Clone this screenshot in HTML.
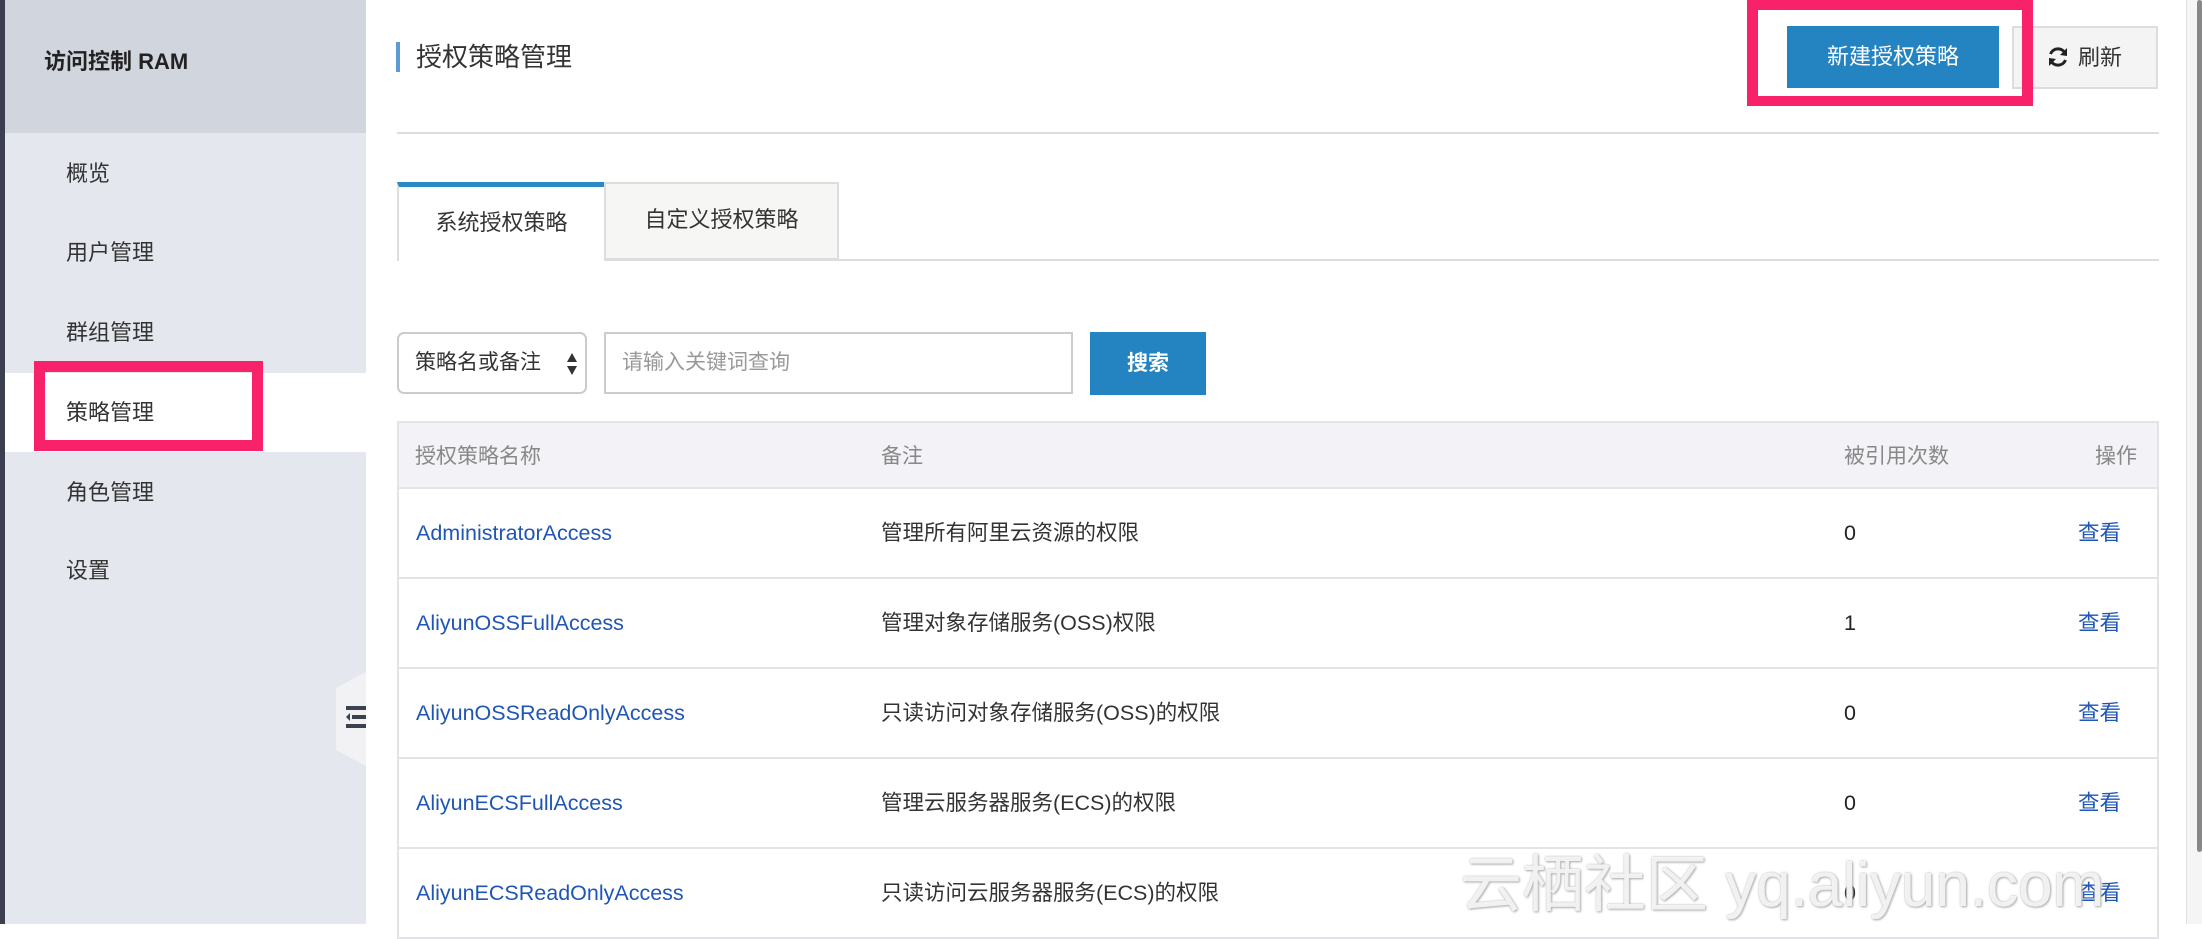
<!DOCTYPE html>
<html><head><meta charset="utf-8"><style>
*{margin:0;padding:0;box-sizing:border-box}
body{width:2202px;height:924px;overflow:hidden;background:#fff;position:relative;font-family:"Liberation Sans","Noto Sans CJK SC",sans-serif;color:#333}
.a{position:absolute}
.side{left:0;top:0;width:366px;height:924px;background:#e4e7ee}
.menu{left:66px;font-size:22px;color:#333;line-height:30px}
.tb{font-size:21px}
.row{left:397px;width:1762px;height:90px;border-bottom:2px solid #e2e4e8;border-left:2px solid #e2e4e8;border-right:2px solid #e2e4e8}
.row span{position:absolute;top:0;line-height:88px;font-size:21.5px}
.n{left:17px;color:#1f56b5}
.r{left:482px;color:#333}
.c{left:1445px;color:#222}
.v{left:1679px;color:#1f56b5}
</style></head><body>
<div class="a side"></div>
<div class="a" style="left:0;top:0;width:5px;height:924px;background:#3b3f4f"></div>
<div class="a" style="left:5px;top:0;width:361px;height:133px;background:#d1d5de"></div>
<div class="a" style="left:44px;top:47px;font-size:22px;font-weight:bold;color:#222;line-height:30px">访问控制 RAM</div>
<div class="a menu" style="top:159px">概览</div>
<div class="a menu" style="top:238px">用户管理</div>
<div class="a menu" style="top:318px">群组管理</div>
<div class="a" style="left:5px;top:373px;width:361px;height:79px;background:#fff"></div>
<div class="a menu" style="top:398px">策略管理</div>
<div class="a menu" style="top:478px">角色管理</div>
<div class="a menu" style="top:556px">设置</div>
<div class="a" style="left:34px;top:361px;width:229px;height:90px;border:11px solid #f7226a"></div>
<svg class="a" style="left:336px;top:672px" width="30" height="94"><polygon points="30,0 30,94 0,78 0,16" fill="#f2f2f4"/><rect x="10" y="34" width="20" height="4" fill="#3c4150"/><rect x="16" y="43" width="14" height="4" fill="#3c4150"/><rect x="10" y="52" width="20" height="4" fill="#3c4150"/><polygon points="14,41 14,49 10,45" fill="#3c4150"/></svg>

<div class="a" style="left:396px;top:42px;width:4px;height:30px;background:#5b9bd5"></div>
<div class="a" style="left:416px;top:40px;font-size:26px;color:#333;line-height:34px">授权策略管理</div>
<div class="a" style="left:397px;top:132px;width:1762px;height:2px;background:#ddd"></div>
<div class="a" style="left:1787px;top:26px;width:212px;height:62px;background:#2484c1;color:#fff;font-size:22px;line-height:62px;text-align:center">新建授权策略</div>
<div class="a" style="left:2012px;top:26px;width:146px;height:63px;background:#f4f4f4;border:2px solid #ddd;font-size:22px;line-height:59px;padding-left:64px;color:#333">刷新</div>
<svg class="a" style="left:2046px;top:45px" width="24" height="24" viewBox="0 0 24 24"><path d="M19 8A8 8 0 0 0 4.5 9" fill="none" stroke="#222" stroke-width="3"/><polygon points="21,3 21,11 14,10" fill="#222"/><path d="M5 16a8 8 0 0 0 14.5-1" fill="none" stroke="#222" stroke-width="3"/><polygon points="3,21 3,13 10,14" fill="#222"/></svg>
<div class="a" style="left:1747px;top:0;width:286px;height:106px;border:11px solid #f7226a;border-top-width:10px;border-bottom-width:10px"></div>

<div class="a" style="left:397px;top:259px;width:1762px;height:2px;background:#ddd"></div>
<div class="a" style="left:397px;top:182px;width:207px;height:79px;background:#fff;border-top:5px solid #2a8bc3;border-left:2px solid #ddd;font-size:22px;line-height:72px;text-align:center">系统授权策略</div>
<div class="a" style="left:604px;top:182px;width:235px;height:78px;background:#f6f6f4;border:2px solid #ddd;font-size:22px;line-height:72px;text-align:center">自定义授权策略</div>

<div class="a" style="left:397px;top:332px;width:190px;height:62px;border:2px solid #ccc;border-radius:7px;background:#fff;font-size:21px;line-height:58px;padding-left:16px">策略名或备注</div>
<svg class="a" style="left:566px;top:352px" width="12" height="24"><polygon points="6,1 11,10 1,10" fill="#333"/><polygon points="6,23 11,14 1,14" fill="#333"/></svg>
<div class="a" style="left:604px;top:332px;width:469px;height:62px;border:2px solid #ccc;background:#fff;font-size:21px;line-height:58px;padding-left:16px;color:#999">请输入关键词查询</div>
<div class="a" style="left:1090px;top:332px;width:116px;height:63px;background:#2484c1;color:#fff;font-size:21px;font-weight:bold;line-height:63px;text-align:center">搜索</div>

<div class="a" style="left:397px;top:421px;width:1762px;height:68px;background:#f2f2f7;border:2px solid #e2e4e8"></div>
<div class="a tb" style="left:415px;top:440px;color:#888">授权策略名称</div>
<div class="a tb" style="left:881px;top:440px;color:#888">备注</div>
<div class="a tb" style="left:1844px;top:440px;color:#888">被引用次数</div>
<div class="a tb" style="left:2095px;top:440px;color:#888">操作</div>

<div class="a row" style="top:489px"><span class="n">AdministratorAccess</span><span class="r">管理所有阿里云资源的权限</span><span class="c">0</span><span class="v">查看</span></div>
<div class="a row" style="top:579px"><span class="n">AliyunOSSFullAccess</span><span class="r">管理对象存储服务(OSS)权限</span><span class="c">1</span><span class="v">查看</span></div>
<div class="a row" style="top:669px"><span class="n">AliyunOSSReadOnlyAccess</span><span class="r">只读访问对象存储服务(OSS)的权限</span><span class="c">0</span><span class="v">查看</span></div>
<div class="a row" style="top:759px"><span class="n">AliyunECSFullAccess</span><span class="r">管理云服务器服务(ECS)的权限</span><span class="c">0</span><span class="v">查看</span></div>
<div class="a row" style="top:849px"><span class="n">AliyunECSReadOnlyAccess</span><span class="r">只读访问云服务器服务(ECS)的权限</span><span class="c">0</span><span class="v">查看</span></div>

<div class="a" style="left:2186px;top:0;width:16px;height:924px;background:#f5f5f5;border-left:1px solid #e0e0e0"></div>
<div class="a" style="left:2197px;top:0;width:5px;height:852px;background:#888;border-radius:3px"></div>
<div class="a" style="left:1460px;top:848px;font-size:62px;color:rgba(255,255,255,0.8);text-shadow:0 0 2px #bbb,1px 1px 2px #aaa;white-space:nowrap;line-height:76px">云栖社区 yq.aliyun.com</div>
</body></html>
